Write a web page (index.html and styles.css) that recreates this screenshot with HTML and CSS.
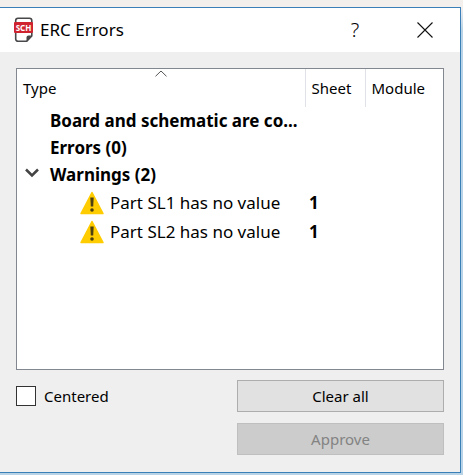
FILE: index.html
```
<!DOCTYPE html>
<html lang="en">
<head>
<meta charset="utf-8" />
<title>ERC Errors</title>
<link rel="stylesheet" href="styles.css">
</head>

<body>
<div class="window">
	<div class="titlebar">
		<svg class="logo" width="20" height="26" viewBox="0 0 20 26">
			<path d="M4 1.2h11.5a2.3 2.3 0 0 1 2.3 2.3V19l-5 5.3H4a2.3 2.3 0 0 1-2.3-2.3V3.5A2.3 2.3 0 0 1 4 1.2z" fill="#fff" stroke="#48484a" stroke-width="1.6"/>
			<path d="M12.5 24.500v-4a2 2 0 0 1 2-2H18z" fill="#48484a"/>
			<rect y="5" width="19" height="11" rx="1" fill="#cf2430"/>
			<text x="9.5" y="14" text-anchor="middle" class="logo-text">SCH</text>
		</svg>
		<h1>ERC Errors</h1>
		<button type="button" class="help" aria-label="Help">?</button>
		<button type="button" class="close" aria-label="Close">
			<svg width="16" height="16" viewBox="0 0 16 16"><path d="M.5.5l15 15M15.5.5l-15 15" stroke="#111" stroke-width="1.1"/></svg>
		</button>
	</div>
	<div class="content">
		<div class="tree">
			<table>
				<thead>
					<tr>
						<th class="type">Type
							<svg class="sort" width="12" height="7" viewBox="0 0 12 7"><path d="M.5 6.300L6 1l5.500 5.300" fill="none" stroke="#555"/></svg>
						</th>
						<th class="sheet">Sheet</th>
						<th class="module">Module</th>
					</tr>
				</thead>
				<tbody>
					<tr class="group"><td colspan="3">Board and schematic are co...</td></tr>
					<tr class="group"><td colspan="3">Errors (0)</td></tr>
					<tr class="group open">
						<td colspan="3"><svg class="arrow" width="14" height="10" viewBox="0 0 14 10"><path d="M1 1.500l6 6 6-6" fill="none" stroke="#444" stroke-width="2.500"/></svg>Warnings (2)</td>
					</tr>
					<tr class="item">
						<td><div><svg width="24" height="24" viewBox="0 0 24 24"><path d="M12 1.500L23 22.500H1z" fill="#fc0" stroke="#fc0" stroke-width="1.500" stroke-linejoin="round"/><path d="M10.300 6.500h3.400l-.5 9h-2.400z" fill="#4d4010"/><circle cx="12" cy="19" r="1.800" fill="#4d4010"/></svg>Part SL1 has no value</div></td>
						<td class="num">1</td>
						<td></td>
					</tr>
					<tr class="item">
						<td><div><svg width="24" height="24" viewBox="0 0 24 24"><path d="M12 1.500L23 22.500H1z" fill="#fc0" stroke="#fc0" stroke-width="1.500" stroke-linejoin="round"/><path d="M10.300 6.500h3.400l-.5 9h-2.400z" fill="#4d4010"/><circle cx="12" cy="19" r="1.800" fill="#4d4010"/></svg>Part SL2 has no value</div></td>
						<td class="num">1</td>
						<td></td>
					</tr>
				</tbody>
			</table>
		</div>
		<div class="footer">
			<label class="check"><input type="checkbox" />Centered</label>
			<div class="buttons">
				<button type="button">Clear all</button>
				<button type="button" disabled>Approve</button>
			</div>
		</div>
	</div>
</div>
</body>
</html>
```
FILE: styles.css
```
*{margin:0; padding:0; box-sizing:border-box;}
body{height:100vh; padding:7px 2px 2px 0; background:linear-gradient(#f2efed, #f2efed 7px, #b9d3e6 30px); font:15px/24px "Noto Sans","Open Sans",sans-serif; color:#000;}
button{font:inherit; color:inherit;}
svg{display:block;}
.window{height:100%; display:flex; flex-direction:column; background:#efefef; border:1px solid #3b7fb8; border-left:0;}
.titlebar{height:44px; flex:none; display:flex; align-items:center; padding-left:14px; background:#fff;}
.titlebar h1{flex:1; margin-left:6px; font-size:17px; font-weight:normal;}
.titlebar button{width:70px; height:44px; display:flex; align-items:center; justify-content:center; background:none; border:0;}
.titlebar .help{font-size:20px; font-weight:300;}
.logo-text{font:bold 8px "Noto Sans",sans-serif; fill:#fff;}
.content{flex:1; display:flex; flex-direction:column; padding:16px 16px 17px 16px;}
.tree{flex:1; background:#fff; border:1px solid #828790;}
table{width:100%; table-layout:fixed; border-collapse:collapse;}
th{height:38px; padding-left:6px; text-align:left; font-weight:normal; border-right:1px solid #dfe3e8;}
.type{position:relative;}
.sheet{width:60px;}
.module{width:78px; border-right:0;}
.sort{position:absolute; top:1px; left:48%;}
.group td{height:27px; padding-left:33px; font-size:17px; font-weight:bold;}
.open td{position:relative;}
.arrow{position:absolute; left:8px; top:7px;}
.item td{height:29px;}
.item div{display:flex; align-items:center; gap:6px; padding-left:63px; font-size:17px;}
.item .num{padding-left:4px; font-size:17px; font-weight:bold;}
.footer{display:flex; justify-content:space-between; padding-top:10px;}
.check{display:flex; align-items:center; gap:8px; height:32px;}
.check input{appearance:none; width:20px; height:20px; background:#fff; border:1px solid #333;}
.buttons{width:207px; display:flex; flex-direction:column; gap:11px;}
.buttons button{height:32px; background:#e1e1e1; border:1px solid #adadad;}
.buttons button:disabled{background:#ccc; border-color:#bfbfbf; color:#838383;}
```
